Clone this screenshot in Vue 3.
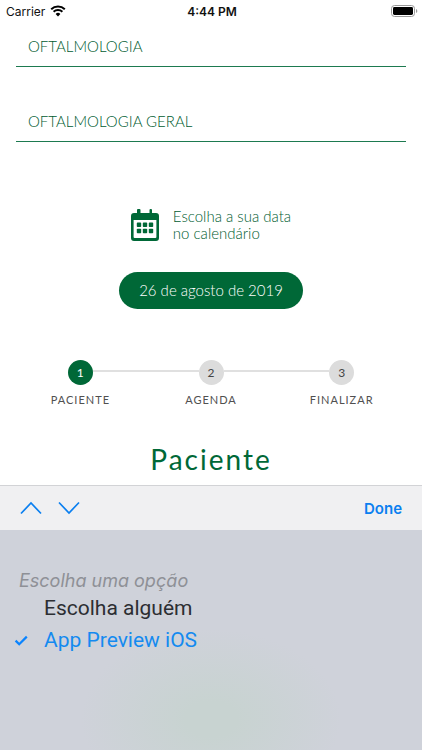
<template>
  <div class="app-page">
    <header class="status-bar">
      <div class="carrier">
        <span>Carrier</span>
        <svg class="wifi" width="16" height="12" viewBox="0 0 16 12" aria-hidden="true">
          <path d="M1.2 4.3a9.8 9.8 0 0 1 13.6 0" />
          <path d="M3.6 6.8a6.4 6.4 0 0 1 8.8 0" />
          <path class="wifi-dot" d="M8 11.4 5.6 9a3.4 3.4 0 0 1 4.8 0z" />
        </svg>
      </div>
      <span class="clock">4:44 PM</span>
      <div class="battery">
        <svg width="27" height="12" viewBox="0 0 27 12" aria-hidden="true">
          <rect x="0.5" y="0.5" width="23" height="11" rx="3" fill="#fff" stroke="#999" />
          <rect x="2" y="2" width="20" height="8" rx="1.4" fill="#000" />
          <path d="M25 4c1.8.6 1.8 3.4 0 4z" fill="#999" />
        </svg>
      </div>
    </header>

    <main class="content">
      <div class="fields">
        <select v-model="specialty" class="field" aria-label="Especialidade">
          <option>OFTALMOLOGIA</option>
        </select>
        <select v-model="subSpecialty" class="field" aria-label="Subespecialidade">
          <option>OFTALMOLOGIA GERAL</option>
        </select>
      </div>

      <div class="date-hint">
        <svg width="28" height="32" viewBox="0 0 28 32" aria-hidden="true">
          <path
            fill="#006837"
            fill-rule="evenodd"
            d="M7 0h1.5q1 0 1 1v3h9V1q0-1 1-1H20q1 0 1 1v3h4q3 0 3 3v22q0 3-3 3H3q-3 0-3-3V7q0-3 3-3h3V1q0-1 1-1zM2.6 11v17q0 1 1 1h20.8q1 0 1-1V11z"
          />
          <g fill="#006837">
            <rect v-for="dot in dots" :key="dot.id" :x="dot.x" :y="dot.y" width="4.4" height="4.4" rx="0.8" />
          </g>
        </svg>
        <p>Escolha a sua data<br />no calendário</p>
      </div>

      <button type="button" class="date-button">26 de agosto de 2019</button>

      <ol class="steps">
        <li v-for="step in steps" :key="step.number" class="step" :class="{ active: step.number === currentStep }">
          <div class="step-track">
            <span class="step-number">{{ step.number }}</span>
          </div>
          <span class="step-label">{{ step.label }}</span>
        </li>
      </ol>

      <h1 class="title">Paciente</h1>
    </main>

    <section class="sheet">
      <div class="toolbar">
        <button type="button" class="nav-button" aria-label="Anterior">
          <svg width="22" height="14" viewBox="0 0 22 14"><path d="M1 12.5 11 2l10 10.5" /></svg>
        </button>
        <button type="button" class="nav-button" aria-label="Próximo">
          <svg width="22" height="14" viewBox="0 0 22 14"><path d="M1 1.5 11 12 21 1.5" /></svg>
        </button>
        <button type="button" class="done-button">Done</button>
      </div>
      <div class="picker" role="radiogroup" aria-label="Paciente">
        <label
          v-for="option in options"
          :key="option.value"
          class="option"
          :class="{ placeholder: option.disabled, selected: selected === option.value }"
        >
          <input v-model="selected" type="radio" name="patient" :value="option.value" :disabled="option.disabled" />
          <span class="check">
            <svg v-if="selected === option.value" width="14" height="11" viewBox="0 0 14 11" aria-hidden="true">
              <path d="M1.6 5.6 5.2 9.2 12.8 1.6" />
            </svg>
          </span>
          <span>{{ option.label }}</span>
        </label>
      </div>
    </section>
  </div>
</template>

<script setup>
import { ref } from 'vue'

const specialty = ref('OFTALMOLOGIA')
const subSpecialty = ref('OFTALMOLOGIA GERAL')
const currentStep = ref(1)
const selected = ref('preview')

const steps = [
  { number: 1, label: 'PACIENTE' },
  { number: 2, label: 'AGENDA' },
  { number: 3, label: 'FINALIZAR' }
]

const options = [
  { value: 'none', label: 'Escolha uma opção', disabled: true },
  { value: 'someone', label: 'Escolha alguém' },
  { value: 'preview', label: 'App Preview iOS' }
]

// calendar icon: 2 rows of 3 days
const dots = [0, 1, 2, 3, 4, 5].map((i) => ({
  id: i,
  x: 5.8 + (i % 3) * 6,
  y: i < 3 ? 13.6 : 19.8
}))
</script>

<style>
body {
  margin: 0;
  background: #fff;
}
</style>

<style scoped>
.app-page {
  min-height: 100vh;
  display: flex;
  flex-direction: column;
  font-family: Lato, 'Open Sans', sans-serif;
  color: #006837;
  background: #fff;
}

button,
select {
  font-family: inherit;
  border: none;
  background: none;
  cursor: pointer;
}

.status-bar {
  display: grid;
  grid-template-columns: 1fr auto 1fr;
  align-items: center;
  height: 22px;
  padding: 0 4px 0 6px;
  font-family: Inter, sans-serif;
  font-size: 12px;
  color: #111;
}

.carrier {
  display: flex;
  align-items: center;
  gap: 5px;
}

.wifi path {
  fill: none;
  stroke: #000;
  stroke-width: 2;
}

.wifi .wifi-dot {
  fill: #000;
  stroke: none;
}

.clock {
  font-weight: 600;
}

.battery {
  display: flex;
  justify-content: flex-end;
}

.content {
  display: flex;
  flex-direction: column;
  align-items: center;
  padding-top: 4px;
}

.fields {
  align-self: stretch;
  display: flex;
  flex-direction: column;
  gap: 34px;
  padding: 0 16px;
}

.field {
  appearance: none;
  width: 100%;
  height: 41px;
  padding: 0 12px;
  border-bottom: 1px solid #1d7a50;
  border-radius: 0;
  font-size: 15px;
  font-weight: 300;
  color: #005c30;
}

.date-hint {
  display: flex;
  align-items: center;
  gap: 14px;
  margin-top: 66px;
}

.date-hint p {
  margin: 0;
  font-size: 15px;
  font-weight: 300;
  line-height: 17px;
  color: #005c30;
}

.date-button {
  height: 37px;
  margin-top: 30px;
  padding: 0 20px 2px;
  border-radius: 20px;
  background: #006837;
  font-size: 15px;
  font-weight: 300;
  color: #fff;
}

.steps {
  align-self: stretch;
  display: flex;
  margin: 51px 0 0;
  padding: 0 15px;
  list-style: none;
}

.step {
  flex: 1;
  display: flex;
  flex-direction: column;
  align-items: center;
  gap: 7px;
}

.step-track {
  align-self: stretch;
  display: flex;
  align-items: center;
}

.step-track::before,
.step-track::after {
  content: '';
  flex: 1;
  height: 2px;
  margin-bottom: 4px;
  background: #e0e0e0;
}

.step:first-child .step-track::before,
.step:last-child .step-track::after {
  background: transparent;
}

.step-number {
  width: 25px;
  height: 25px;
  border-radius: 50%;
  background: #dcdcdc;
  font-size: 12px;
  line-height: 25px;
  text-align: center;
  color: #444;
}

.active .step-number {
  background: #006837;
  color: #fff;
}

.step-label {
  font-size: 11px;
  line-height: 16px;
  letter-spacing: 1px;
  color: #505050;
}

.title {
  margin: 32px 0 7px;
  font-size: 28px;
  line-height: 38px;
  font-weight: 400;
  letter-spacing: 2px;
}

.sheet {
  flex: 1;
  display: flex;
  flex-direction: column;
  font-family: Inter, sans-serif;
}

.toolbar {
  display: flex;
  align-items: center;
  gap: 16px;
  height: 44px;
  padding: 0 20px;
  border-top: 1px solid #d2d3d6;
  background: #f0f0f2;
}

.nav-button {
  display: flex;
  padding: 0;
}

.nav-button path {
  fill: none;
  stroke: #0a7ff0;
  stroke-width: 1.7;
}

.done-button {
  margin-left: auto;
  padding: 0;
  font-size: 15px;
  font-weight: 600;
  color: #0a7ff0;
}

.picker {
  flex: 1;
  padding: 38px 14px 24px;
  font-family: Roboto, sans-serif;
  background: radial-gradient(ellipse 130px 90px at 50% 86%, #c8d3d1 20%, #cfd2da 100%);
}

.option {
  display: flex;
  align-items: center;
  height: 32px;
  font-size: 21px;
  color: #2c2e32;
  cursor: pointer;
}

.option input {
  appearance: none;
  width: 0;
  height: 0;
  margin: 0;
}

.check {
  display: flex;
  width: 30px;
}

.check path {
  fill: none;
  stroke: #0a84ff;
  stroke-width: 2.2;
}

.option.placeholder {
  height: 24px;
  font-family: Inter, sans-serif;
  font-size: 18px;
  font-style: italic;
  color: #8e9096;
}

.placeholder .check {
  width: 5px;
}

.option.selected {
  color: #148af0;
}
</style>
